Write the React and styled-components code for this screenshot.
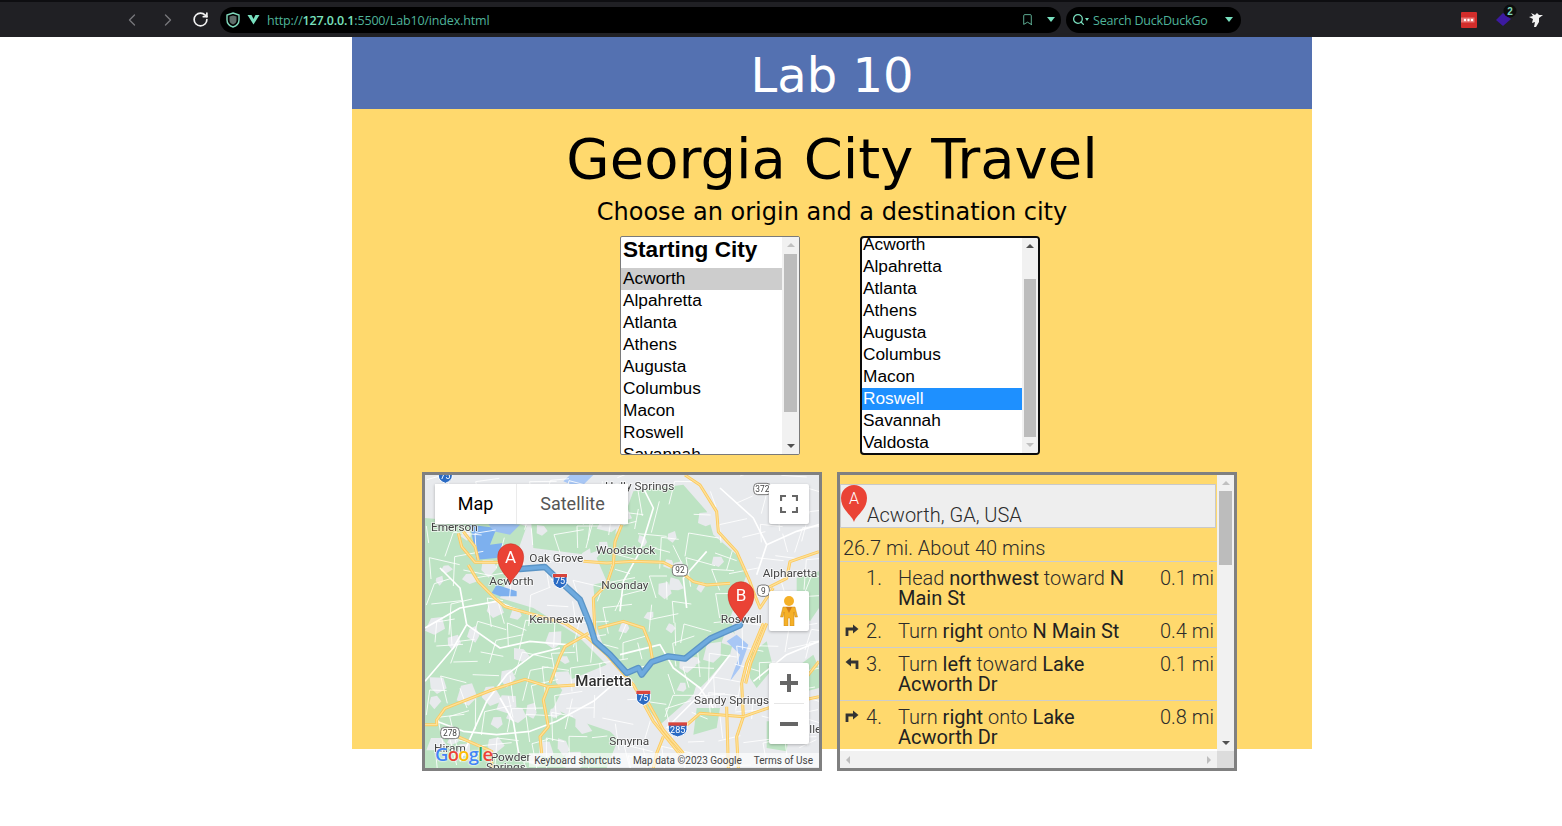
import React from 'react'
import styled, { createGlobalStyle } from 'styled-components'
import { ChevronLeft, ChevronRight, RotateCw, Bookmark, Search } from 'lucide-react'

const GlobalStyle = createGlobalStyle`
  html, body {
    margin: 0;
    padding: 0;
    background: #fff;
    font-family: "Liberation Sans", Arial, sans-serif;
  }
  #root {
    min-height: 826px;
  }
`

const BrowserBar = styled.div`
  height: 35px;
  border-top: 2px solid #0e0e11;
  background: #202024;
  display: flex;
  align-items: center;
  box-sizing: content-box;
`

const NavIcons = styled.div`
  display: flex;
  align-items: center;
  gap: 16px;
  margin-left: 122px;
  margin-right: 10px;
`

const NavButton = styled.span`
  display: flex;
  width: 20px;
  justify-content: center;
  margin-left: ${(p) => (p.$active ? -4 : 0)}px;
  color: ${(p) => (p.$active ? '#f2f2f2' : '#77777b')};
`

const UrlField = styled.div`
  width: 841px;
  height: 26px;
  border-radius: 13px;
  background: #000;
  display: flex;
  align-items: center;
  padding-left: 6px;
  box-sizing: border-box;
`

const UrlText = styled.span`
  margin-left: 7px;
  padding-top: 1px;
  font: 12.5px "Open Sans", sans-serif;
  letter-spacing: -0.16px;
  color: #4fb39a;
  flex: 1;
  b {
    font-weight: 600;
    color: #79e0bf;
  }
`

const Caret = styled.span`
  width: 0;
  height: 0;
  border-left: 4.5px solid transparent;
  border-right: 4.5px solid transparent;
  border-top: 5px solid #79e0bf;
  margin: 0 ${(p) => p.$right}px 0 ${(p) => p.$left}px;
`

const MiniCaret = styled.span`
  width: 0;
  height: 0;
  border-left: 2.5px solid transparent;
  border-right: 2.5px solid transparent;
  border-top: 3px solid #79e0bf;
`

const SearchField = styled.div`
  width: 175px;
  height: 26px;
  margin-left: 5px;
  border-radius: 13px;
  background: #000;
  display: flex;
  align-items: center;
  padding-left: 6px;
  box-sizing: border-box;
  color: #79e0bf;
`

const SearchText = styled.span`
  padding-top: 1px;
  font: 12.5px "Open Sans", sans-serif;
  letter-spacing: -0.2px;
  color: #4fb39a;
  flex: 1;
  margin-left: 4px;
`

const Extensions = styled.div`
  display: flex;
  align-items: center;
  margin-left: 220px;
  gap: 16px;
`

const Ext = styled.svg`
  display: block;
  overflow: visible;
  flex: none;
  margin-left: ${(p) => p.$gap || 0}px;
`

const Sheet = styled.div`
  width: 960px;
  margin-left: 352px;
`

const Banner = styled.header`
  height: 72px;
  padding-top: 4px;
  box-sizing: border-box;
  background: #5471b1;
  color: #fff;
  display: flex;
  align-items: center;
  justify-content: center;
  font: 48px "DejaVu Sans", Verdana, sans-serif;
`

const Body = styled.main`
  height: 640px;
  background: #ffd96d;
  padding-top: 16px;
  box-sizing: border-box;
`

const Title = styled.h1`
  margin: 0;
  text-align: center;
  font: 400 56px/67px "DejaVu Sans", Verdana, sans-serif;
  color: #000;
`

const Subtitle = styled.h2`
  margin: 5px 0 9px;
  text-align: center;
  font: 400 24px/30px "DejaVu Sans", Verdana, sans-serif;
  color: #000;
`

const Lists = styled.div`
  display: flex;
  gap: 60px;
  padding-left: 268px;
`

const ListBox = styled.div`
  width: 180px;
  height: 219px;
  box-sizing: border-box;
  background: #fff;
  display: flex;
  overflow: hidden;
  border: ${(p) => (p.$focused ? '2px solid #0c0c0c' : '1px solid #7a7a7a')};
  border-radius: ${(p) => (p.$focused ? 4 : 2)}px;
`

const Options = styled.div`
  flex: 1;
  min-width: 0;
  margin-top: ${(p) => p.$shift}px;
  font-size: 17.3px;
  color: #000;
`

const GroupLabel = styled.div`
  height: 31px;
  padding-left: 2px;
  font-weight: 700;
  font-size: 22.6px;
  line-height: 25px;
`

const Option = styled.div`
  height: 22px;
  line-height: 21px;
  padding-left: ${(p) => p.$pad}px;
  white-space: nowrap;
  background: ${(p) => (p.$state === 'picked' ? '#1e90ff' : p.$state === 'dim' ? '#cdcdcd' : 'transparent')};
  color: ${(p) => (p.$state === 'picked' ? '#fff' : '#000')};
`

const VBar = styled.div`
  width: ${(p) => p.$w}px;
  background: #f1f1f1;
  position: relative;
  flex: none;
`

const VThumb = styled.div`
  position: absolute;
  left: 2px;
  right: 2px;
  top: ${(p) => p.$top}px;
  height: ${(p) => p.$h}px;
  background: #bcbcbc;
`

const Arrow = styled.span`
  position: absolute;
  width: 0;
  height: 0;
  ${(p) => (p.$dir === 'up' || p.$dir === 'down') && `
    left: 50%;
    margin-left: -4px;
    border-left: 4px solid transparent;
    border-right: 4px solid transparent;
  `}
  ${(p) => (p.$dir === 'left' || p.$dir === 'right') && `
    top: 50%;
    margin-top: -4px;
    border-top: 4px solid transparent;
    border-bottom: 4px solid transparent;
  `}
  ${(p) => p.$dir === 'up' && `top: 6px; border-bottom: 4px solid ${p.$c};`}
  ${(p) => p.$dir === 'down' && `bottom: 6px; border-top: 4px solid ${p.$c};`}
  ${(p) => p.$dir === 'left' && `left: 6px; border-right: 4px solid ${p.$c};`}
  ${(p) => p.$dir === 'right' && `right: 6px; border-left: 4px solid ${p.$c};`}
`

const Panels = styled.div`
  display: flex;
  gap: 15px;
  margin-top: 17px;
  padding-left: 70px;
`

const Frame = styled.section`
  width: 400px;
  height: 299px;
  box-sizing: border-box;
  border: 3px solid #808080;
  position: relative;
  overflow: hidden;
`

const MapDrawing = styled.svg`
  display: block;
  width: 394px;
  height: 293px;
  filter: blur(0.5px);
`

const MapTabs = styled.div`
  position: absolute;
  left: 10px;
  top: 9px;
  height: 40px;
  display: flex;
  background: #fff;
  box-shadow: 0 1px 3px rgba(0, 0, 0, 0.25);
  font: 18px/38px Roboto, sans-serif;
`

const MapTab = styled.div`
  display: flex;
  align-items: center;
  justify-content: center;
  width: ${(p) => p.$w}px;
  color: ${(p) => (p.$on ? '#000' : '#565656')};
  border-left: ${(p) => (p.$on ? 'none' : '1px solid #ebebeb')};
`

const MapButton = styled.div`
  position: absolute;
  left: 344px;
  top: ${(p) => p.$top}px;
  width: 40px;
  height: ${(p) => p.$h}px;
  background: #fff;
  border-radius: 2px;
  box-shadow: 0 1px 3px rgba(0, 0, 0, 0.25);
  display: flex;
  flex-direction: column;
  align-items: center;
  justify-content: center;
`

const ZoomDivider = styled.div`
  width: 30px;
  height: 1px;
  background: #e6e6e6;
  margin: 11px 0;
`

const GoogleMark = styled.div`
  position: absolute;
  left: 10px;
  bottom: 2px;
  font: 600 18.5px "Open Sans", sans-serif;
  letter-spacing: -0.8px;
  line-height: 24px;
  text-shadow: 0 0 2px #fff, 0 0 2px #fff;
`

const Letter = styled.span`
  color: ${(p) => p.$c};
`

const Attribution = styled.div`
  position: absolute;
  right: 0;
  bottom: 1px;
  display: flex;
  align-items: center;
  gap: 12px;
  height: 14px;
  padding: 0 6px 0 5px;
  background: rgba(255, 255, 255, 0.65);
  font: 10px Roboto, sans-serif;
  color: #444;
  white-space: nowrap;
`

const DirectionsGrid = styled.div`
  display: grid;
  grid-template-columns: 377px 17px;
  grid-template-rows: 276px 17px;
  height: 293px;
`

const Directions = styled.div`
  overflow: hidden;
  padding-top: 9px;
  box-sizing: border-box;
  font: 300 20px/20px Roboto, sans-serif;
  color: #2b2b2b;
  b {
    font-weight: 400;
    color: #222;
  }
`

const Origin = styled.div`
  height: 44px;
  box-sizing: border-box;
  border: 1px solid #c9c9c9;
  background: #eeeeee;
  display: flex;
  align-items: flex-end;
  margin-right: 1px;
`

const PinImage = styled.svg`
  flex: none;
  margin-bottom: 5px;
`

const OriginName = styled.span`
  padding-bottom: 2px;
`

const Summary = styled.div`
  padding: 10px 3px 3px;
`

const Step = styled.div`
  display: grid;
  grid-template-columns: 20px 22px 16px 245px 1fr;
  align-items: start;
  border-top: 1px solid #cdcdcd;
  padding: 6px 0;
`

const TurnIcon = styled.svg`
  margin: 2px 0 0 5px;
  display: block;
`

const StepNo = styled.span`
  grid-column: 2;
  text-align: right;
`

const StepText = styled.span`
  grid-column: 4;
`

const StepDist = styled.span`
  grid-column: 5;
  text-align: right;
  padding-right: 3px;
  white-space: nowrap;
`

const HBar = styled.div`
  background: #f1f1f1;
  position: relative;
`

const Corner = styled.div`
  background: #dcdcdc;
`

const cities = ['Acworth', 'Alpahretta', 'Atlanta', 'Athens', 'Augusta', 'Columbus', 'Macon', 'Roswell', 'Savannah', 'Valdosta']

const greens = [
  '15,150 130,160 180,130 320,175 300,230 240,390 340,420 470,500 560,590 440,640 400,720 480,760 600,800 560,900 15,900',
  '640,70 790,50 860,130 880,200 950,260 980,320 930,450 945,500 930,560 860,640 800,700 720,770 660,690 640,640 560,560 530,480 520,350 560,340 530,270 600,180',
  '330,120 520,100 600,120 580,230 500,260 340,240',
  '990,560 1040,520 1060,600 1010,660 990,630',
  '1100,620 1180,560 1197,600 1197,660 1120,680',
  '1040,760 1110,760 1100,850 1040,840',
  '1130,330 1197,310 1197,420 1170,460 1130,400',
  '830,720 900,720 890,780 820,800',
]

// small rng so the map mesh stays the same between renders
let seed = 4711
const rnd = () => {
  seed = (seed * 16807) % 2147483647
  return seed / 2147483647
}

const inside = (x, y) => {
  if (y > 640 && x > 560 && x < 760) return false
  return x < 620 || (x < 950 && y > 60 && y < 720)
}

const blobs = []
for (let i = 0; i < 70; i += 1) {
  const x = 15 + rnd() * 930
  const y = 130 + rnd() * 770
  if (inside(x, y)) {
    const r = 12 + rnd() * 20
    const pts = [0, 1, 2, 3, 4].map((k) => {
      const a = k * 1.257 + rnd() * 0.5
      const d = r * (0.7 + rnd() * 0.7)
      return `${Math.round(x + Math.cos(a) * d)},${Math.round(y + Math.sin(a) * d)}`
    })
    blobs.push(pts.join(' '))
  }
}

const mesh = []
const step = 70
for (let gx = 15; gx < 1197; gx += step) {
  for (let gy = 21; gy < 900; gy += step) {
    const x = gx + rnd() * 50
    const y = gy + rnd() * 50
    const parts = []
    if (rnd() > 0.3) parts.push(`M${Math.round(x)} ${Math.round(y)} L${Math.round(x + step + (rnd() - 0.5) * 50)} ${Math.round(y + (rnd() - 0.5) * 50)}`)
    if (rnd() > 0.3) parts.push(`M${Math.round(x)} ${Math.round(y)} L${Math.round(x + (rnd() - 0.5) * 50)} ${Math.round(y + step + (rnd() - 0.5) * 50)}`)
    if (parts.length) mesh.push(parts.join(' '))
  }
}

const whiteRoads = [
  'M15 480 L120 420 L230 400 L330 440',
  'M15 640 L100 540 L140 470 L120 360 L60 300',
  'M140 470 L240 540 L330 520 L440 530',
  'M120 880 L200 700 L260 620 L340 560 L420 540',
  'M50 760 L130 790 L230 800 L330 790 L410 760 L520 700 L590 640',
  'M240 690 L280 760 L300 880',
  'M600 430 L610 340 L660 250 L700 120 L660 40',
  'M800 420 L790 330 L860 250',
  'M900 60 L1000 150 L1040 230 L1010 320',
  'M1040 230 L1130 190 L1197 170',
  'M600 560 L720 530 L760 600 L840 660 L880 720',
  'M740 780 L830 690 L930 560',
  'M1000 640 L1100 560 L1197 520',
]

const yellowRoads = [
  'M115 196 L125 236 L165 283 L235 283',
  'M130 191 L165 236 L175 276',
  'M145 291 L175 341 L225 391 L255 416 L345 441 L435 466 L505 511 L560 560 L640 650 L700 760 L780 860',
  'M235 283 L300 280 M490 280 L560 285 L640 280 L730 283 L775 306 L820 341 L860 351 L930 346',
  'M795 21 L840 51 L890 131 L895 191 L950 251 L990 341 L1000 371',
  'M605 171 L585 221 L580 290 L560 350 L520 390 L525 500',
  'M15 770 L50 770 L50 756 L75 721 L215 666 L315 634 L385 656 L465 651',
  'M105 802 L215 850 L215 900',
  'M385 656 L370 696 L385 776 L360 806 L365 856',
  'M390 646 L420 566 L435 536 L505 496',
  'M1030 466 L980 586 L965 646 L970 746 L950 806 L955 900',
  'M1040 466 L992 586 L977 646',
  'M800 771 L840 736 L970 746 L1050 718 L1197 686',
  'M920 716 L925 900',
  'M1197 251 L1110 281 L1100 331 L1020 371',
  'M680 696 L730 786 L790 856',
  'M730 806 L710 856 L700 900',
  'M535 480 L610 460 L670 480 L690 530 L700 590',
  'M1000 371 L1020 420 L1060 360',
  'M1197 580 L1150 640 L1120 720',
]

const route = 'M270 300 L300 303 L375 297 L420 340 L480 395 L510 470 L525 520 L570 560 L620 615 L655 600 L665 620 L695 582 L745 565 L795 572 L870 512 L960 472 L962 450'

const labels = [
  { x: 555, y: 66, t: 'Holly Springs' },
  { x: 33, y: 188, t: 'Emerson' },
  { x: 328, y: 281, t: 'Oak Grove' },
  { x: 528, y: 257, t: 'Woodstock' },
  { x: 544, y: 363, t: 'Noonday' },
  { x: 1028, y: 327, t: 'Alpharetta' },
  { x: 208, y: 350, t: 'Acworth' },
  { x: 328, y: 464, t: 'Kennesaw' },
  { x: 902, y: 464, t: 'Roswell' },
  { x: 822, y: 707, t: 'Sandy Springs' },
  { x: 568, y: 831, t: 'Smyrna' },
  { x: 42, y: 851, t: 'Hiram' },
  { x: 212, y: 878, t: 'Powder' },
  { x: 198, y: 908, t: 'Springs' },
  { x: 1168, y: 794, t: 'lle' },
]

const interstates = [
  { x: 420, y: 338, t: '75' },
  { x: 670, y: 688, t: '75' },
  { x: 773, y: 783, w: 56, t: '285' },
  { x: 76, y: 22, t: '75' },
]

const stateRoads = [
  { x: 780, y: 307, w: 46, t: '92' },
  { x: 1027, y: 63, w: 52, t: '372' },
  { x: 90, y: 795, w: 56, t: '278' },
  { x: 1030, y: 368, w: 36, t: '9' },
]

function MapPin({ x, y, letter }) {
  return (
    <g transform={`translate(${x} ${y}) scale(3)`}>
      <path d="M0 27 C-2 20 -13 14 -13 0 A13 13 0 1 1 13 0 C13 14 2 20 0 27 Z" fill="#ea4335" stroke="#c5291f" strokeWidth="0.5" />
      <text x="0" y="6" textAnchor="middle" fontFamily="Roboto, sans-serif" fontSize="17" fill="#fff">{letter}</text>
    </g>
  )
}

function RoadMap() {
  return (
    <MapDrawing viewBox="15 21 1182 879" preserveAspectRatio="none">
      <rect x="15" y="21" width="1182" height="879" fill="#e8eaed" />
      {greens.map((p) => <polygon key={p} points={p} fill="#bde3c3" />)}
      {blobs.map((p) => <polygon key={p} points={p} fill="#e8eaed" />)}
      <polygon points="560,640 640,660 720,780 660,880 560,780" fill="#e8eaed" />
      <path d="M150 170 L230 180 L210 230 L250 225 L230 270 L170 275 Z" fill="#7db0ee" />
      <path d="M230 350 L290 370 L290 385 L240 385 L215 375 Z" fill="#7db0ee" />
      <path d="M200 160 L300 170 L270 200 L220 190 Z" fill="#9cc0f0" />
      <path d="M450 21 L520 21 L480 60 L430 40 Z" fill="#a8c7f5" />
      <path d="M920 520 L950 500 L985 530 L960 600 L930 640 L960 560 Z" fill="#a8c7f5" />
      {mesh.map((d) => <path key={d} d={d} fill="none" stroke="#fff" strokeWidth="3" strokeLinejoin="round" opacity="0.85" />)}
      {whiteRoads.map((d) => <path key={d} d={d} fill="none" stroke="#fff" strokeWidth="5" strokeLinejoin="round" />)}
      {yellowRoads.map((d) => (
        <g key={d}>
          <path d={d} fill="none" stroke="#fcca5e" strokeWidth="9" strokeLinejoin="round" />
          <path d={d} fill="none" stroke="#fee19a" strokeWidth="4" strokeLinejoin="round" />
        </g>
      ))}
      <path d={route} fill="none" stroke="#5b95c6" strokeWidth="19" strokeLinejoin="round" strokeLinecap="round" />
      <path d={route} fill="none" stroke="#6eaadf" strokeWidth="11" strokeLinejoin="round" strokeLinecap="round" />
      {interstates.map((s) => {
        const w = s.w || 42
        return (
          <g key={s.x} transform={`translate(${s.x} ${s.y})`}>
            <path d={`M${-w / 2} -20 H${w / 2} V2 Q${w / 2} 16 0 24 Q${-w / 2} 16 ${-w / 2} 2 Z`} fill="#2a6bc4" stroke="#fff" strokeWidth="3" />
            <path d={`M${-w / 2} -20 H${w / 2} V-10 H${-w / 2} Z`} fill="#d8453c" />
            <text y="11" textAnchor="middle" fontFamily="Roboto, sans-serif" fontSize="27" fill="#fff">{s.t}</text>
          </g>
        )
      })}
      {stateRoads.map((s) => (
        <g key={s.x} transform={`translate(${s.x} ${s.y})`}>
          <rect x={-s.w / 2} y="-17" width={s.w} height="34" rx="12" fill="#fff" stroke="#777" strokeWidth="3" />
          <text y="9" textAnchor="middle" fontFamily="Roboto, sans-serif" fontSize="25" fill="#444">{s.t}</text>
        </g>
      ))}
      {labels.map((l) => (
        <text key={l.t} x={l.x} y={l.y} fontFamily="Roboto, sans-serif" fontSize="35.5" fill="#444" stroke="#fff" strokeOpacity="0.75" strokeWidth="5" paintOrder="stroke">{l.t}</text>
      ))}
      <text x="466" y="653" fontFamily="Roboto, sans-serif" fontWeight="500" fontSize="45" fill="#2f2f2f" stroke="#fff" strokeWidth="6" paintOrder="stroke">Marietta</text>
      <MapPin x={272} y={266} letter="A" />
      <MapPin x={963} y={380} letter="B" />
    </MapDrawing>
  )
}

function TurnRight() {
  return (
    <TurnIcon width="14" height="14" viewBox="0 0 14 14">
      <path d="M2 13 V6 H9" fill="none" stroke="#333" strokeWidth="2.8" />
      <path d="M8 1.5 L13.5 6 L8 10.5 Z" fill="#333" />
    </TurnIcon>
  )
}

function TurnLeft() {
  return (
    <TurnIcon width="14" height="14" viewBox="0 0 14 14">
      <path d="M12 13 V6 H5" fill="none" stroke="#333" strokeWidth="2.8" />
      <path d="M6 1.5 L0.5 6 L6 10.5 Z" fill="#333" />
    </TurnIcon>
  )
}

const steps = [
  { n: '1.', d: '0.1 mi', text: <>Head <b>northwest</b> toward <b>N Main St</b></> },
  { n: '2.', d: '0.4 mi', icon: <TurnRight />, text: <>Turn <b>right</b> onto <b>N Main St</b></> },
  { n: '3.', d: '0.1 mi', icon: <TurnLeft />, text: <>Turn <b>left</b> toward <b>Lake Acworth Dr</b></> },
  { n: '4.', d: '0.8 mi', icon: <TurnRight />, text: <>Turn <b>right</b> onto <b>Lake Acworth Dr</b></> },
]

export default function App() {
  return (
    <>
      <GlobalStyle />
      <BrowserBar>
        <NavIcons>
          <NavButton><ChevronLeft size={20} strokeWidth={1.6} /></NavButton>
          <NavButton><ChevronRight size={20} strokeWidth={1.6} /></NavButton>
          <NavButton $active><RotateCw size={17} strokeWidth={2.4} /></NavButton>
        </NavIcons>
        <UrlField>
          <Ext width="14" height="16" viewBox="0 0 14 16">
            <path d="M7 1 L13 3 V8 C13 12 10 14 7 15 C4 14 1 12 1 8 V3 Z" fill="none" stroke="#7fd8bb" strokeWidth="1.4" />
            <path d="M7 3.5 L10.5 4.6 V8 C10.5 10.5 9 11.7 7 12.5 C5 11.7 3.5 10.5 3.5 8 V4.6 Z" fill="#5e6b68" />
          </Ext>
          <Ext width="13" height="11" viewBox="0 0 13 11" $gap={7}>
            <path d="M0.5 1 H4.5 L6.5 5 L8.5 1 H12.5 L6.5 10.5 Z" fill="#79e0bf" />
          </Ext>
          <UrlText>http://<b>127.0.0.1</b>:5500/Lab10/index.html</UrlText>
          <Bookmark size={13} color="#79e0bf" strokeWidth={1.4} />
          <Caret $left={13} $right={6} />
        </UrlField>
        <SearchField>
          <Search size={13} strokeWidth={2.4} />
          <MiniCaret />
          <SearchText>Search DuckDuckGo</SearchText>
          <Caret $left={0} $right={8} />
        </SearchField>
        <Extensions>
          <Ext width="16" height="16" viewBox="0 0 16 16">
            <rect width="16" height="16" rx="1" fill="#d32d2b" />
            <rect y="5.5" width="13.5" height="5" fill="#e87674" />
            <circle cx="4" cy="8" r="1.2" fill="#fff" />
            <circle cx="7.5" cy="8" r="1.2" fill="#fff" />
            <circle cx="11" cy="8" r="1.2" fill="#fff" />
          </Ext>
          <Ext width="17" height="17" viewBox="0 0 17 17" $gap={2}>
            <path d="M8 2 L16 8 L8 15 L1 9 Z" fill="#3c1aa0" />
            <circle cx="15" cy="0" r="6.5" fill="#0d0d0d" />
            <text x="15" y="3.5" textAnchor="middle" fontSize="10" fontWeight="700" fontFamily="Liberation Sans, sans-serif" fill="#7fd8bb">2</text>
          </Ext>
          <Ext width="16" height="17" viewBox="0 0 16 17">
            <path d="M3 2 L7 4 L9 2 L11 4 L15 4 L11 7 L11 11 L8 16 L6 16 L7 11 L4 12 L5 8 L1 6 L5 5 Z" fill="#f2f2f2" />
          </Ext>
        </Extensions>
      </BrowserBar>

      <Sheet>
        <Banner>Lab 10</Banner>
        <Body>
          <Title>Georgia City Travel</Title>
          <Subtitle>Choose an origin and a destination city</Subtitle>
          <Lists>
            <ListBox>
              <Options $shift={0}>
                <GroupLabel>Starting City</GroupLabel>
                {cities.map((c, i) => (
                  <Option key={c} $pad={2} $state={i === 0 ? 'dim' : ''}>{c}</Option>
                ))}
              </Options>
              <VBar $w={17}>
                <Arrow $dir="up" $c="#c0c0c0" />
                <VThumb $top={17} $h={158} />
                <Arrow $dir="down" $c="#505050" />
              </VBar>
            </ListBox>
            <ListBox $focused>
              <Options $shift={-4}>
                {cities.map((c) => (
                  <Option key={c} $pad={1} $state={c === 'Roswell' ? 'picked' : ''}>{c}</Option>
                ))}
              </Options>
              <VBar $w={16}>
                <Arrow $dir="up" $c="#505050" />
                <VThumb $top={41} $h={158} />
                <Arrow $dir="down" $c="#c0c0c0" />
              </VBar>
            </ListBox>
          </Lists>
          <Panels>
            <Frame>
              <RoadMap />
              <MapTabs>
                <MapTab $on $w={81}>Map</MapTab>
                <MapTab $w={111}>Satellite</MapTab>
              </MapTabs>
              <MapButton $top={9} $h={40}>
                <svg width="18" height="18" viewBox="0 0 18 18">
                  <path d="M1 6 V1 H6 M12 1 H17 V6 M17 12 V17 H12 M6 17 H1 V12" fill="none" stroke="#666" strokeWidth="2.2" />
                </svg>
              </MapButton>
              <MapButton $top={116} $h={40}>
                <svg width="18" height="30" viewBox="0 0 18 30">
                  <circle cx="9" cy="5" r="5" fill="#f5b027" />
                  <path d="M3 11 H15 L17.5 21 H15 L14 16 V30 H10 V22 H8 V30 H4 V16 L3 21 H0.5 Z" fill="#f5b027" stroke="#c88414" strokeWidth="0.5" />
                  <path d="M6 11 H12 L9 17 Z" fill="#d07a1a" />
                </svg>
              </MapButton>
              <MapButton $top={188} $h={81}>
                <svg width="18" height="18" viewBox="0 0 18 18">
                  <path d="M7 0 H11 V7 H18 V11 H11 V18 H7 V11 H0 V7 H7 Z" fill="#666" />
                </svg>
                <ZoomDivider />
                <svg width="18" height="18" viewBox="0 0 18 18">
                  <rect y="7" width="18" height="4" fill="#666" />
                </svg>
              </MapButton>
              <GoogleMark>
                <Letter $c="#4285f4">G</Letter>
                <Letter $c="#ea4335">o</Letter>
                <Letter $c="#fbbc05">o</Letter>
                <Letter $c="#4285f4">g</Letter>
                <Letter $c="#34a853">l</Letter>
                <Letter $c="#ea4335">e</Letter>
              </GoogleMark>
              <Attribution>
                <span>Keyboard shortcuts</span>
                <span>Map data ©2023 Google</span>
                <span>Terms of Use</span>
              </Attribution>
            </Frame>
            <Frame>
              <DirectionsGrid>
                <Directions>
                  <Origin>
                    <PinImage width="26" height="37" viewBox="-13 -13 26 37">
                      <path d="M0 24 C-2 17 -13 12 -13 0 A13 13 0 1 1 13 0 C13 12 2 17 0 24 Z" fill="#ea4335" />
                      <text y="5.5" textAnchor="middle" fontFamily="Roboto, sans-serif" fontSize="16" fill="#fff">A</text>
                    </PinImage>
                    <OriginName>Acworth, GA, USA</OriginName>
                  </Origin>
                  <Summary>26.7 mi. About 40 mins</Summary>
                  {steps.map((s) => (
                    <Step key={s.n}>
                      <span>{s.icon}</span>
                      <StepNo>{s.n}</StepNo>
                      <StepText>{s.text}</StepText>
                      <StepDist>{s.d}</StepDist>
                    </Step>
                  ))}
                </Directions>
                <VBar $w={17}>
                  <Arrow $dir="up" $c="#c0c0c0" />
                  <VThumb $top={16} $h={74} />
                  <Arrow $dir="down" $c="#505050" />
                </VBar>
                <HBar>
                  <Arrow $dir="left" $c="#bdbdbd" />
                  <Arrow $dir="right" $c="#bdbdbd" />
                </HBar>
                <Corner />
              </DirectionsGrid>
            </Frame>
          </Panels>
        </Body>
      </Sheet>
    </>
  )
}
